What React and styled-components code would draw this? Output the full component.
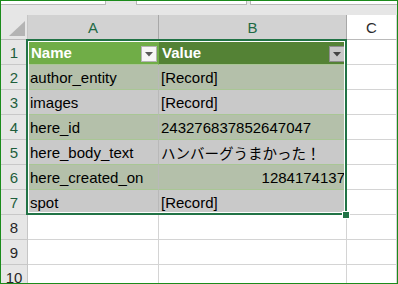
import React from "react";
import styled, { createGlobalStyle } from "styled-components";

const GlobalStyle = createGlobalStyle`
  html, body { margin: 0; padding: 0; background: #ffffff; }
  body { font-family: "Liberation Sans", Arial, "Noto Sans CJK JP", sans-serif; }
`;

const Frame = styled.div`
  position: relative;
  width: 398px;
  height: 284px;
  box-sizing: border-box;
  border: 1px solid #1b8b1b;
  overflow: hidden;
  background: #ffffff;
  display: flex;
  flex-direction: column;
`;

const TopStrip = styled.div`
  height: 14px;
  flex: none;
  background: #e6e6e6;
  display: flex;
  align-items: flex-start;
`;

const FormulaBox = styled.div`
  height: 3px;
  width: ${(p) => p.$w}px;
  flex: ${(p) => (p.$grow ? "1" : "none")};
  margin-left: ${(p) => p.$ml || 0}px;
  background: #ffffff;
  border-bottom: 1px solid #b9b9b9;
  border-left: ${(p) => (p.$bl ? "1px solid #b9b9b9" : "none")};
  border-right: ${(p) => (p.$br ? "1px solid #b9b9b9" : "none")};
`;

const Sheet = styled.div`
  display: grid;
  grid-template-columns: 27px 131px 188px 1fr;
  grid-auto-rows: 25px;
`;

const Corner = styled.div`
  box-sizing: border-box;
  background: #e6e6e6;
  border-right: 1px solid #c6c6c6;
  border-bottom: 1px solid #bababa;
  display: flex;
  justify-content: flex-end;
  align-items: flex-end;
  padding: 0 2px 3px 0;
`;

const ColHead = styled.div`
  box-sizing: border-box;
  background: ${(p) => (p.$sel ? "#d2d2d2" : "#ffffff")};
  border-right: 1px solid ${(p) => (p.$sel ? "#a8a8a8" : "#d4d4d4")};
  border-bottom: 1px solid #bababa;
  display: flex;
  align-items: center;
  justify-content: center;
  padding-top: 1px;
  font-size: 15px;
  color: ${(p) => (p.$sel ? "#1e6a44" : "#2b2b2b")};
`;

const RowHead = styled.div`
  box-sizing: border-box;
  background: #e6e6e6;
  border-right: 1px solid #c6c6c6;
  border-bottom: 1px solid #c8c8c8;
  display: flex;
  align-items: center;
  justify-content: center;
  font-size: 15px;
  color: ${(p) => (p.$sel ? "#1e5e3c" : "#262626")};
`;

const EmptyCell = styled.div`
  box-sizing: border-box;
  background: #ffffff;
  border-right: 1px solid #d4d4d4;
  border-bottom: 1px solid #d4d4d4;
`;

const HeaderCell = styled.div`
  box-sizing: border-box;
  background: ${(p) => p.$bg};
  border-bottom: 1px solid #a9c695;
  border-right: 1px solid ${(p) => p.$bg};
  display: flex;
  align-items: center;
  justify-content: space-between;
  padding-left: 3px;
  color: #ffffff;
  font-weight: bold;
  font-size: 15px;
`;

const FilterButton = styled.div`
  box-sizing: border-box;
  width: 16px;
  height: 16px;
  align-self: flex-end;
  margin: 0 1px 2px 0;
  background: ${(p) => (p.$active ? "#c8c8c8" : "#f6f6f6")};
  border: 1px solid ${(p) => (p.$active ? "#8e8e8e" : "#b4b4b4")};
  display: flex;
  align-items: center;
  justify-content: center;
`;

const DataCell = styled.div`
  box-sizing: border-box;
  background: ${(p) => (p.$alt ? "#c9c9c9" : "#b4c0aa")};
  border-bottom: 1px solid #a9c695;
  border-right: 1px solid ${(p) => (p.$first ? "#b9b9b9" : "#c9c9c9")};
  display: flex;
  align-items: center;
  justify-content: ${(p) => (p.$right ? "flex-end" : "flex-start")};
  padding: 0 1px 0 ${(p) => (p.$first ? 2 : 2)}px;
  font-size: ${(p) => (p.$cjk ? "14.5px" : "15px")};
  color: #000000;
  white-space: nowrap;
  overflow: hidden;
`;

const Selection = styled.div`
  position: absolute;
  left: 25px;
  top: 38px;
  width: 321px;
  height: 176px;
  box-sizing: border-box;
  border: 2px solid #217346;
  box-shadow: inset 0 0 0 1px #ffffff;
  pointer-events: none;
`;

const FillHandle = styled.div`
  position: absolute;
  left: 341px;
  top: 210px;
  width: 6px;
  height: 6px;
  background: #217346;
  border: 1px solid #ffffff;
`;

const Arrow = ({ color }) => (
  <svg width="8" height="5" viewBox="0 0 8 5">
    <polygon points="0,0 8,0 4,4.5" fill={color} />
  </svg>
);

const rows = [
  { name: "author_entity", value: "[Record]" },
  { name: "images", value: "[Record]" },
  { name: "here_id", value: "243276837852647047" },
  { name: "here_body_text", value: "ハンバーグうまかった！", cjk: true },
  { name: "here_created_on", value: "1284174137", right: true },
  { name: "spot", value: "[Record]" },
];

export default function App() {
  return (
    <>
      <GlobalStyle />
      <Frame>
        <TopStrip>
          <FormulaBox $w={104} $br />
          <FormulaBox $w={109} $ml={30} $bl $br />
          <FormulaBox $grow $ml={3} $bl />
        </TopStrip>
        <Sheet>
          <Corner>
            <svg width="16" height="15" viewBox="0 0 16 15">
              <polygon points="16,0 16,15 0,15" fill="#b4b4b4" />
            </svg>
          </Corner>
          <ColHead $sel>A</ColHead>
          <ColHead $sel>B</ColHead>
          <ColHead>C</ColHead>

          <RowHead $sel>1</RowHead>
          <HeaderCell $bg="#70ad47">
            Name
            <FilterButton>
              <Arrow color="#5a5a5a" />
            </FilterButton>
          </HeaderCell>
          <HeaderCell $bg="#548235">
            Value
            <FilterButton $active>
              <Arrow color="#444444" />
            </FilterButton>
          </HeaderCell>
          <EmptyCell />

          {rows.map((r, i) => (
            <React.Fragment key={r.name}>
              <RowHead $sel>{i + 2}</RowHead>
              <DataCell $first $alt={i % 2 === 1}>
                {r.name}
              </DataCell>
              <DataCell $alt={i % 2 === 1} $right={r.right} $cjk={r.cjk}>
                {r.value}
              </DataCell>
              <EmptyCell />
            </React.Fragment>
          ))}

          {[8, 9, 10].map((n) => (
            <React.Fragment key={n}>
              <RowHead>{n}</RowHead>
              <EmptyCell />
              <EmptyCell />
              <EmptyCell />
            </React.Fragment>
          ))}
        </Sheet>
        <Selection />
        <FillHandle />
      </Frame>
    </>
  );
}
